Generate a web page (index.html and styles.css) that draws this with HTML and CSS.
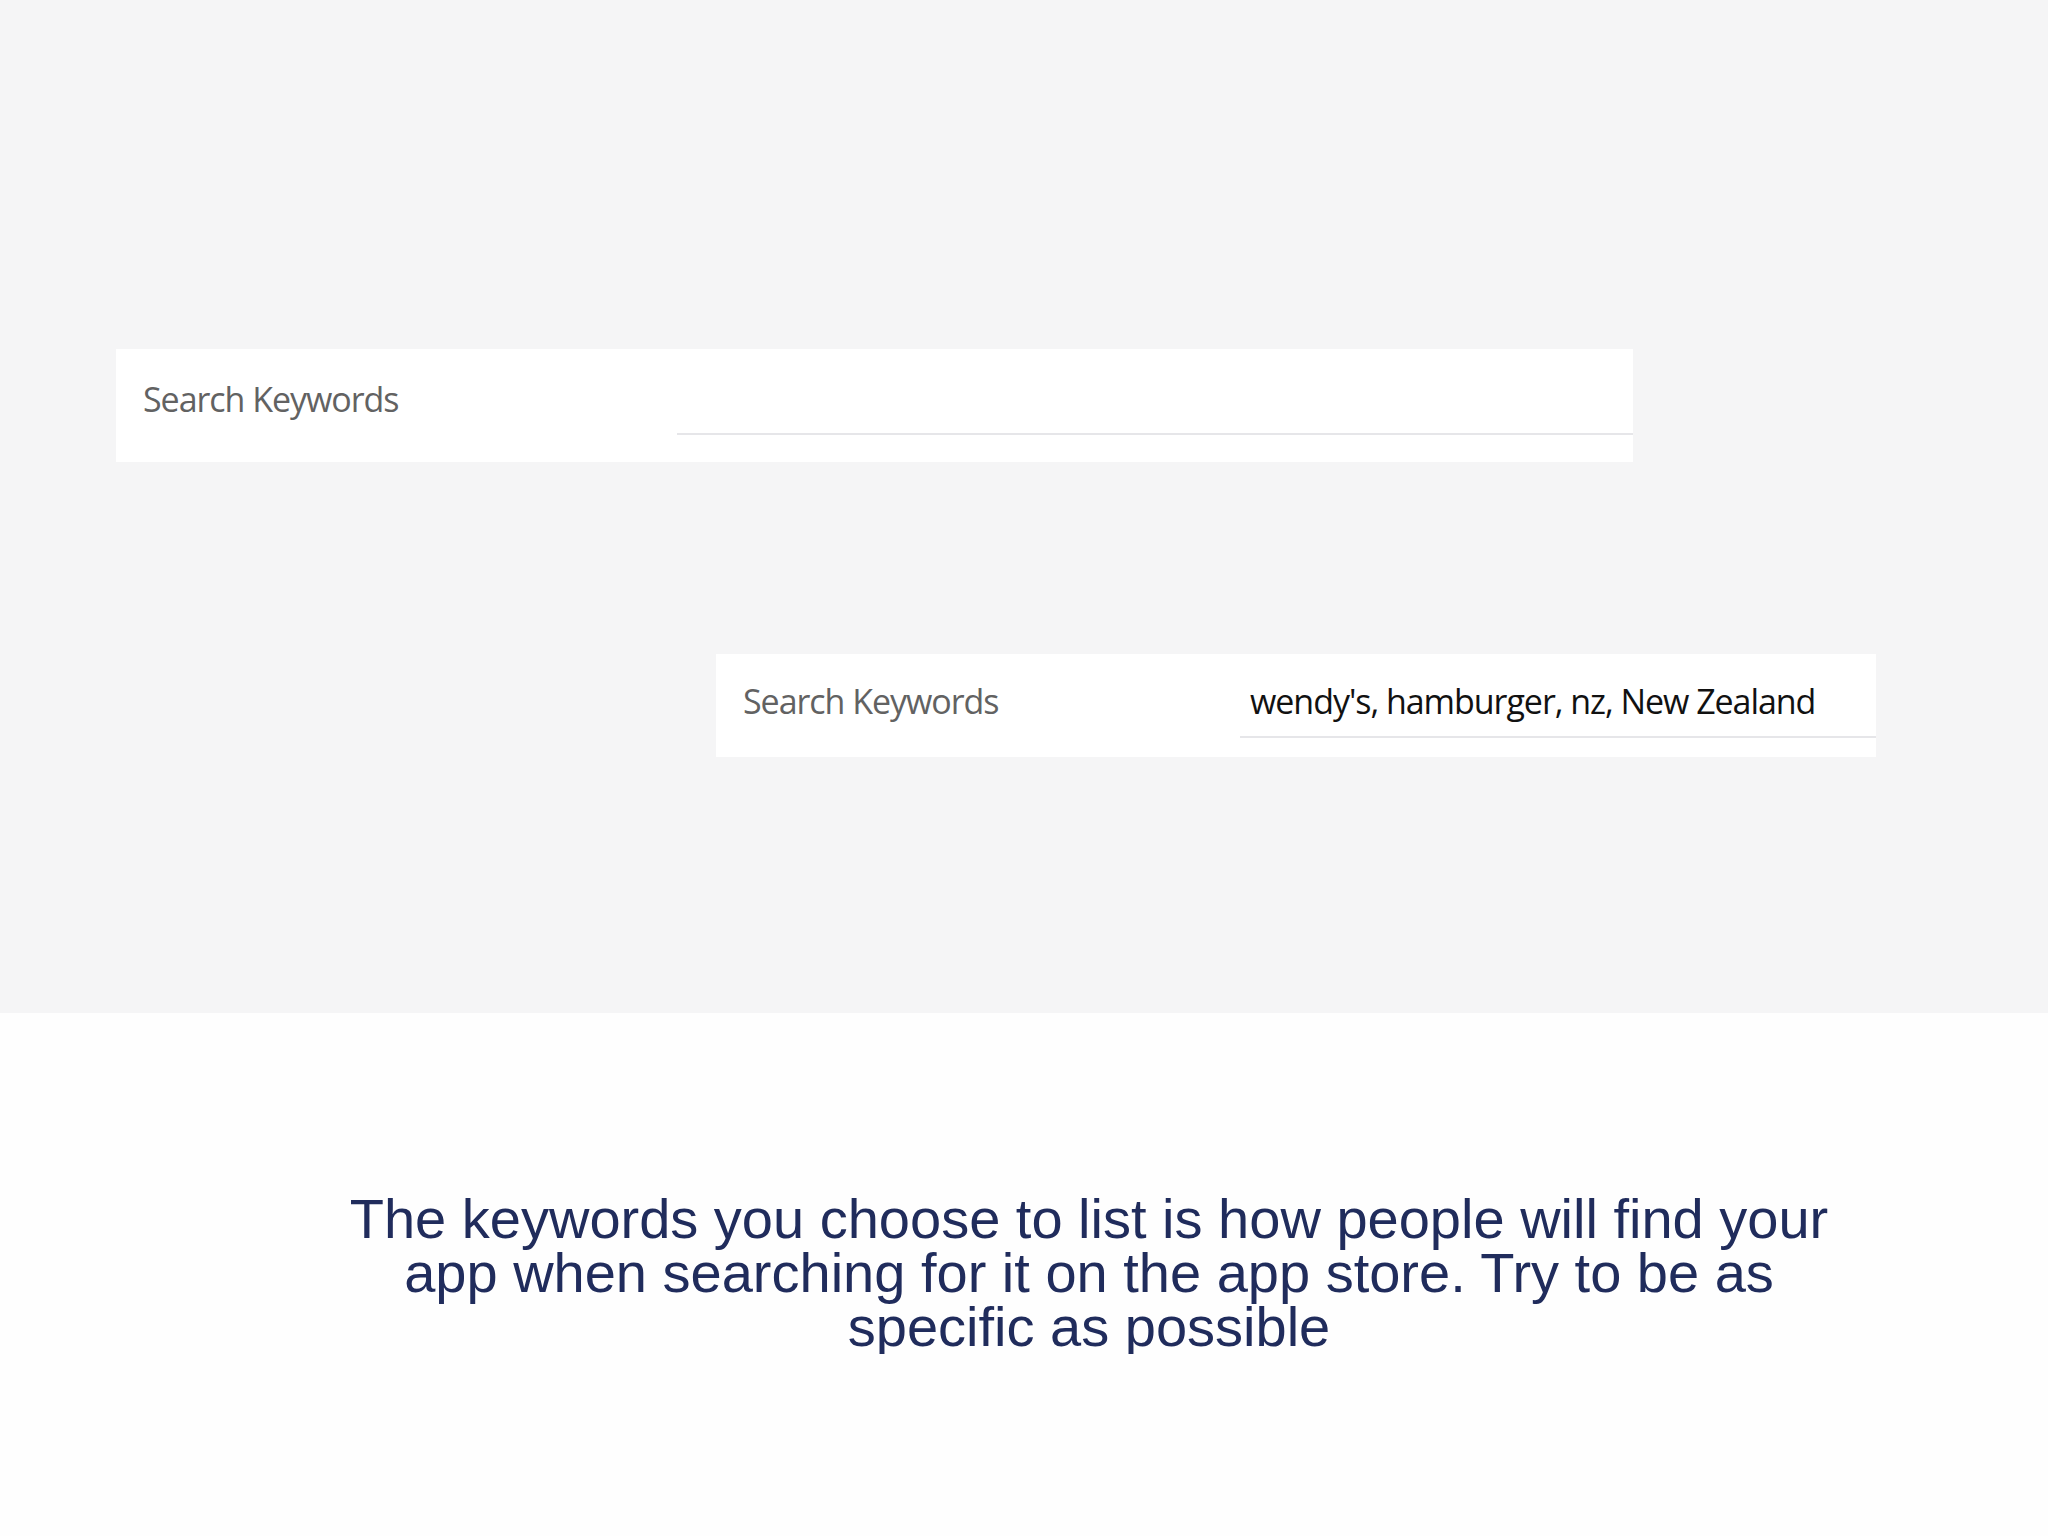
FILE: index.html
```html
<!DOCTYPE html>
<html lang="en">
<head>
    <meta charset="UTF-8">
    <meta name="viewport" content="width=device-width, initial-scale=1.0">
    <title>Search Keywords</title>
    <link rel="stylesheet" href="styles.css">
</head>
<body>
    <div class="stage">
        <div class="field field-empty">
            <div class="field-label">Search Keywords</div>
            <div class="field-input"></div>
        </div>

        <div class="field field-filled">
            <div class="field-label">Search Keywords</div>
            <div class="field-input">wendy's, hamburger, nz, New Zealand</div>
        </div>
    </div>

    <div class="caption">
        The keywords you choose to list is how people will find your app when searching for it on the app store. Try to be as specific as possible
    </div>
</body>
</html>
```

FILE: styles.css
```css
body {
    margin: 0;
    background: #fefefe;
    font-family: 'Open Sans', 'Noto Sans', sans-serif;
}
.stage {
    height: 1013px;
    box-sizing: border-box;
    padding-top: 349px;
    background: #f5f5f6;
}
.field {
    display: flex;
    align-items: flex-start;
    background: #fff;
    font-size: 34px;
    line-height: 46px;
    letter-spacing: -1.05px;
}
.field-label {
    color: #626262;
}
.field-input {
    flex: 1;
    min-height: 46px;
    color: #111;
}
.field-empty {
    width: 1517px;
    margin-left: 116px;
    padding: 27px 0 27px 27px;
    box-sizing: border-box;
}
.field-empty .field-label {
    width: 534px;
}
.field-empty .field-input {
    padding-bottom: 11px;
    border-bottom: 2px solid #e6e6e9;
}
.field-filled {
    width: 1160px;
    margin: 192px 0 0 716px;
    padding: 24px 0 19px 27px;
    box-sizing: border-box;
}
.field-filled .field-label {
    width: 497px;
}
.field-filled .field-input {
    padding: 0 0 12px 10px;
    border-bottom: 2px solid #e6e6e9;
}
.caption {
    width: 1520px;
    margin: 179px 0 0 329px;
    font-family: 'Liberation Sans', Arial, sans-serif;
    font-size: 56px;
    line-height: 54px;
    text-align: center;
    color: #202c5c;
}
```
